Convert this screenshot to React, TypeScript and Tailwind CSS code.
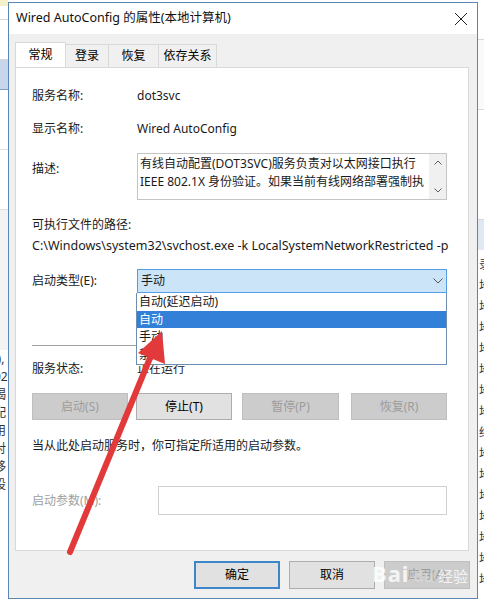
import React from "react"

const font = { fontFamily: '"Noto Sans", "Noto Sans CJK SC", sans-serif' }

function Btn({ label, disabled, primary, className }: { label: string; disabled?: boolean; primary?: boolean; className?: string }) {
  return (
    <div
      className={
        "flex items-center justify-center text-[12px] border " +
        (disabled
          ? "bg-[#cccccc] border-[#bfbfbf] text-[#9c9c9c] "
          : primary
          ? "bg-[#e1e1e1] border-[#3f86c8] border-2 text-black "
          : "bg-[#e1e1e1] border-[#adadad] text-black ") +
        (className ?? "")
      }
    >
      {label}
    </div>
  )
}

function Tab({ label, active, className }: { label: string; active?: boolean; className?: string }) {
  return (
    <div
      className={
        "flex items-center justify-center text-[12px] border border-b-0 " +
        (active ? "bg-white border-[#d9d9d9] h-[25px] -mb-px z-10 " : "bg-[#f0f0f0] border-[#d9d9d9] -ml-px h-[23px] mt-[2px] ") +
        (className ?? "")
      }
    >
      {label}
    </div>
  )
}

function LeftStrip() {
  return (
    <div className="w-[8px] h-full overflow-hidden bg-white flex flex-col text-[12px] text-[#333]">
      <div className="h-[6px] bg-[#f4f0c8]" />
      <div className="h-[14px] border-b border-[#d8d8d8]" />
      <div className="h-[40px] border-b border-[#d8d8d8]" />
      <div className="h-[30px] bg-[#c7d6ea] border-b border-[#7ba0cc]" />
      <div className="h-[60px] border-b border-[#e0e0e0]" />
      <div className="h-[60px] border-b border-[#e0e0e0]" />
      <div className="h-[140px] bg-[#f3f3f3]" />
      <div className="flex flex-col leading-[18px] -ml-[6px]">
        <span>(),</span>
        <span>02</span>
        <span>喝</span>
        <span>配</span>
        <span>用</span>
        <span>对</span>
        <span>移</span>
        <span>设</span>
      </div>
    </div>
  )
}

function RightStrip() {
  return (
    <div className="w-[6px] h-full overflow-hidden bg-white flex flex-col text-[12px] text-[#333]">
      <div className="h-[40px] border-b border-[#d8d8d8]" />
      <div className="h-[70px] bg-[#fafafa] border-b border-[#d8d8d8]" />
      <div className="h-[110px] border-b border-[#d8d8d8]" />
      <div className="h-[30px] bg-[#dfe8f3]" />
      <div className="flex flex-col leading-[21px] pt-[4px] pl-[1px]">
        {["录", "地", "地", "地", "地", "地", "地", "地", "结", "地", "地", "地", "地", "地", "地", "地"].map((c, i) => (
          <span key={i}>{c}</span>
        ))}
      </div>
    </div>
  )
}

function RedArrow() {
  return (
    <svg className="absolute left-0 top-0 pointer-events-none" width="484" height="600" viewBox="0 0 484 600">
      <line x1="70" y1="552" x2="150" y2="358" stroke="#e23a3a" strokeWidth="6" strokeLinecap="round" />
      <polygon points="162,331 165,364 138,353" fill="#e23a3a" />
    </svg>
  )
}

export default function App() {
  return (
    <div className="relative w-[484px] h-[600px] overflow-hidden bg-white flex flex-row" style={font}>
      <LeftStrip />
      <div className="w-[470px] mt-[2px] h-[597px] border border-[#5b86b3] bg-[#f0f0f0] flex flex-col">
        <div className="h-[31px] bg-white flex items-center justify-between pl-[7px] pr-[9px]">
          <span className="text-[12.5px] text-[#111]">Wired AutoConfig 的属性(本地计算机)</span>
          <svg width="14" height="14" viewBox="0 0 14 14">
            <path d="M1 1 L13 13 M13 1 L1 13" stroke="#222" strokeWidth="1" />
          </svg>
        </div>
        <div className="flex flex-row mt-[8px] ml-[6px]">
          <Tab label="常规" active className="w-[51px]" />
          <Tab label="登录" className="w-[44px]" />
          <Tab label="恢复" className="w-[51px]" />
          <Tab label="依存关系" className="w-[59px]" />
        </div>
        <div className="relative ml-[6px] mr-[8px] h-[484px] bg-white border border-[#d9d9d9] flex flex-col pl-[16px] pr-[21px] text-[12px] text-[#1a1a1a]">
          <div className="flex items-center h-[20px] mt-[18px]">
            <span className="w-[105px]">服务名称:</span>
            <span>dot3svc</span>
          </div>
          <div className="flex items-center h-[20px] mt-[13px]">
            <span className="w-[105px]">显示名称:</span>
            <span>Wired AutoConfig</span>
          </div>
          <div className="flex flex-row mt-[14px] h-[47px]">
            <span className="w-[105px] pt-[7px]">描述:</span>
            <div className="flex-1 border border-[#c4c4c4] flex flex-row">
              <div className="flex-1 pl-[2px] pt-[1px] leading-[18px] text-[12px] whitespace-nowrap overflow-hidden">
                <div>有线自动配置(DOT3SVC)服务负责对以太网接口执行</div>
                <div>IEEE 802.1X 身份验证。如果当前有线网络部署强制执</div>
              </div>
              <div className="w-[17px] bg-[#f0f0f0] flex flex-col items-center justify-between py-[6px]">
                <svg width="8" height="5" viewBox="0 0 8 5">
                  <path d="M0.5 4.5 L4 1 L7.5 4.5" stroke="#606060" fill="none" />
                </svg>
                <svg width="8" height="5" viewBox="0 0 8 5">
                  <path d="M0.5 0.5 L4 4 L7.5 0.5" stroke="#606060" fill="none" />
                </svg>
              </div>
            </div>
          </div>
          <div className="flex items-center h-[20px] mt-[15px]">可执行文件的路径:</div>
          <div className="flex items-center h-[21px] mt-[1px] whitespace-nowrap text-[12.5px]">
            C:\Windows\system32\svchost.exe -k LocalSystemNetworkRestricted -p
          </div>
          <div className="flex flex-row items-center mt-[12px] h-[24px]">
            <span className="w-[105px]">启动类型(E):</span>
            <div className="flex-1 h-full bg-[#cce4f7] border border-[#569de5] flex items-center justify-between pl-[3px] pr-[3px]">
              <span>手动</span>
              <svg width="10" height="6" viewBox="0 0 10 6">
                <path d="M0.5 0.5 L5 5 L9.5 0.5" stroke="#555" fill="none" />
              </svg>
            </div>
          </div>
          <div className="mt-[52px] border-t border-[#a0a0a0]" />
          <div className="flex items-center h-[20px] mt-[13px]">
            <span className="w-[105px]">服务状态:</span>
            <span>正在运行</span>
          </div>
          <div className="flex flex-row justify-between mt-[14px] h-[27px]">
            <Btn label="启动(S)" disabled className="w-[96px]" />
            <Btn label="停止(T)" className="w-[96px]" />
            <Btn label="暂停(P)" disabled className="w-[97px] ml-[2px]" />
            <Btn label="恢复(R)" disabled className="w-[96px] ml-[4px]" />
          </div>
          <div className="flex items-center h-[20px] mt-[16px]">当从此处启动服务时，你可指定所适用的启动参数。</div>
          <div className="flex flex-row items-center mt-[30px] h-[29px]">
            <span className="w-[126px] text-[#a0a0a0]">启动参数(M):</span>
            <div className="flex-1 h-full border border-[#d0d0d0] bg-white" />
          </div>

          <div className="absolute left-[120px] top-[225px] w-[311px] h-[72px] bg-white border border-[#6e8eb0] border-t-0 flex flex-col text-[12px] leading-[17.5px]">
            <div className="pl-[2px]">自动(延迟启动)</div>
            <div className="pl-[2px] bg-[#3380d8] text-white">自动</div>
            <div className="pl-[2px]">手动</div>
            <div className="pl-[2px]">禁用</div>
          </div>
        </div>
        <div className="flex flex-row justify-end gap-[9px] pr-[7px] mt-[10px]">
          <Btn label="确定" primary className="w-[86px] h-[28px]" />
          <Btn label="取消" className="w-[86px] h-[28px]" />
          <Btn label="应用(A)" disabled className="w-[86px] h-[28px]" />
        </div>
      </div>
      <RightStrip />
      <div className="absolute left-[372px] top-[562px] flex flex-row items-end gap-[4px] text-white opacity-80 pointer-events-none">
        <span className="text-[22px] font-bold leading-none tracking-[1px]">Bai</span>
        <span className="text-[16px] font-bold leading-none text-[#d8d8d8]">du</span>
        <span className="text-[15px] leading-none">经验</span>
      </div>
      <RedArrow />
    </div>
  )
}
